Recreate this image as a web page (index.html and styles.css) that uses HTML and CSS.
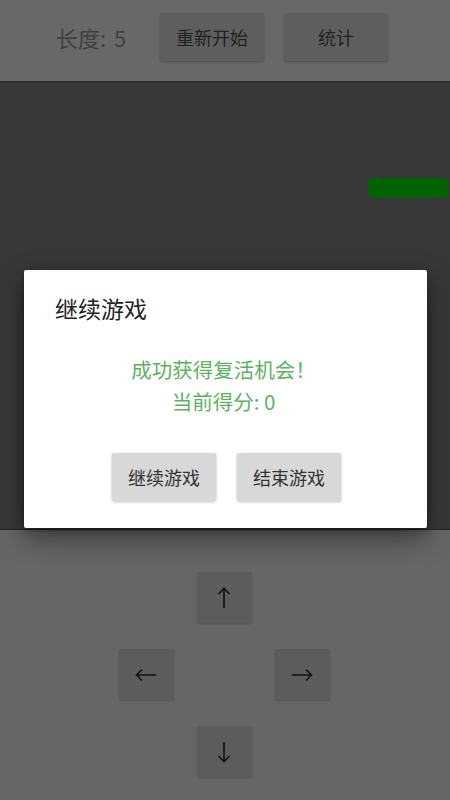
FILE: index.html
```html
<!DOCTYPE html>
<html lang="zh">
<head>
<meta charset="utf-8">
<link rel="stylesheet" href="styles.css">
</head>
<body>
<div class="app">
  <div class="topbar">
    <span class="length">长度: 5</span>
    <button class="tbtn restart">重新开始</button>
    <button class="tbtn">统计</button>
  </div>
  <div class="board">
    <div class="snake"></div>
  </div>
  <div class="controls">
    <div class="pad">
      <button class="dir up" aria-label="↑"><svg width="22" height="22" viewBox="0 0 22 22"><path d="M11 21V1.5M5.5 7L11 1.5L16.5 7" fill="none" stroke="#111" stroke-width="1.6"/></svg></button>
      <button class="dir left" aria-label="←"><svg width="22" height="22" viewBox="0 0 22 22"><path d="M21 11H1.5M7 5.5L1.5 11L7 16.5" fill="none" stroke="#111" stroke-width="1.6"/></svg></button>
      <button class="dir right" aria-label="→"><svg width="22" height="22" viewBox="0 0 22 22"><path d="M1 11H20.5M15 5.5L20.5 11L15 16.5" fill="none" stroke="#111" stroke-width="1.6"/></svg></button>
      <button class="dir down" aria-label="↓"><svg width="22" height="22" viewBox="0 0 22 22"><path d="M11 1V20.5M5.5 15L11 20.5L16.5 15" fill="none" stroke="#111" stroke-width="1.6"/></svg></button>
    </div>
  </div>
  <div class="dialog">
    <div class="dtitle">继续游戏</div>
    <div class="dmsg">
      <div>成功获得复活机会！</div>
      <div>当前得分: 0</div>
    </div>
    <div class="dactions">
      <button class="dbtn">继续游戏</button>
      <button class="dbtn">结束游戏</button>
    </div>
  </div>
</div>
</body>
</html>
```
FILE: styles.css
```css
* { box-sizing: border-box; }
html, body { margin: 0; padding: 0; }
body {
  width: 450px;
  height: 800px;
  overflow: hidden;
  font-family: "Noto Sans CJK SC", "Noto Sans", sans-serif;
  background: #666666;
}
.app {
  position: relative;
  width: 450px;
  height: 800px;
  display: flex;
  flex-direction: column;
}
button {
  font-family: inherit;
  border: none;
  margin: 0;
  padding: 0;
}
.topbar {
  height: 82px;
  background: #686868;
  border-bottom: 1px solid #2c2c2c;
  display: flex;
  align-items: flex-start;
  padding-top: 13px;
  padding-left: 56px;
}
.length {
  font-size: 22px;
  color: #404040;
  line-height: 48px;
  width: 71px;
  white-space: nowrap;
  word-spacing: 3px;
}
.tbtn {
  width: 104px;
  height: 48px;
  background: #5e5e5e;
  color: #222222;
  font-size: 18px;
  border-radius: 2px;
  box-shadow: 0 1px 2px rgba(0,0,0,0.25);
}
.restart { margin-left: 33px; margin-right: 20px; }
.board {
  position: relative;
  height: 448px;
  background: #383838;
  border-bottom: 1px solid #262626;
}
.snake {
  position: absolute;
  left: 368px;
  top: 96px;
  width: 80px;
  height: 20px;
  background: #006300;
  border-radius: 5px;
}
.controls {
  flex: 1;
  background: #666666;
  padding-top: 42px;
  display: flex;
  justify-content: center;
}
.pad {
  display: grid;
  grid-template-columns: 55px 55px 55px;
  grid-template-rows: 51px 51px 51px;
  column-gap: 23px;
  row-gap: 26px;
  grid-template-areas:
    ". up ."
    "left . right"
    ". down .";
  margin-left: -2px;
}
.dir {
  background: #5c5c5c;
  border-radius: 2px;
  box-shadow: 0 1px 2px rgba(0,0,0,0.2);
  display: flex;
  align-items: center;
  justify-content: center;
}
.dir svg { display: block; }
.up { grid-area: up; }
.left { grid-area: left; }
.right { grid-area: right; }
.down { grid-area: down; }
.dialog {
  position: absolute;
  left: 24px;
  top: 270px;
  width: 403px;
  height: 258px;
  background: #ffffff;
  border-radius: 2px;
  box-shadow: 0 10px 28px rgba(0,0,0,0.45), 0 2px 6px rgba(0,0,0,0.3);
  display: flex;
  flex-direction: column;
}
.dtitle {
  padding: 23px 0 0 31px;
  font-size: 23px;
  line-height: 30px;
  color: #222222;
}
.dmsg {
  margin-top: 30px;
  text-align: center;
  font-size: 20.5px;
  line-height: 32px;
  color: #5cb35f;
  margin-left: -4px;
}
.dactions {
  margin-top: 36px;
  display: flex;
  justify-content: center;
  gap: 21px;
  margin-left: 2px;
}
.dbtn {
  width: 104px;
  height: 48px;
  background: #d8d8d8;
  color: #333333;
  font-size: 18px;
  border-radius: 2px;
  box-shadow: 0 1px 3px rgba(0,0,0,0.25);
}
```
